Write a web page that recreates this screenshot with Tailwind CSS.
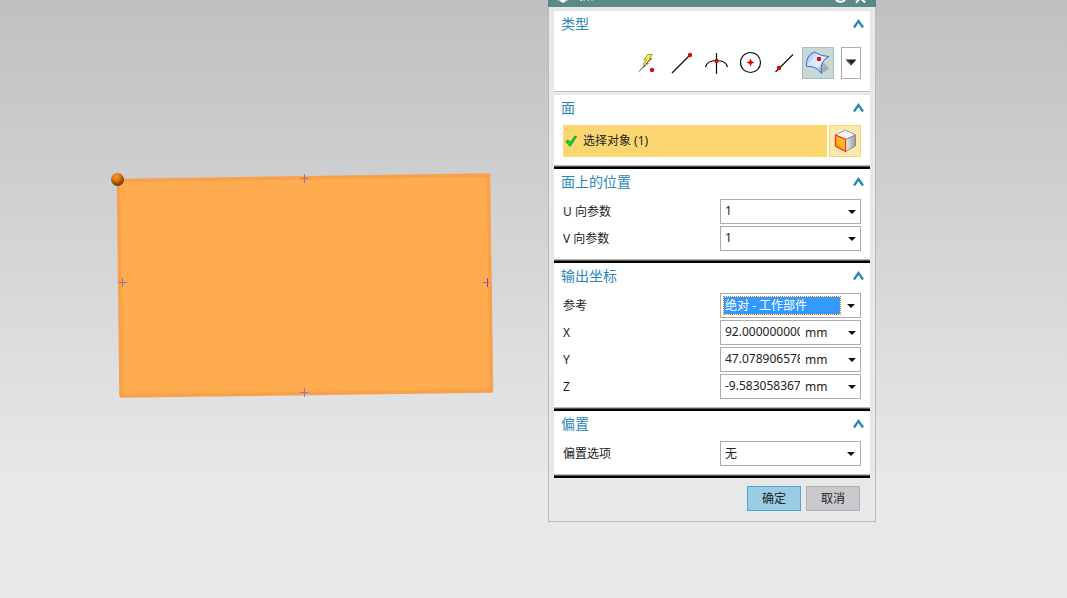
<!DOCTYPE html>
<html lang="zh-CN">
<head>
<meta charset="utf-8">
<title>点</title>
<script src="https://cdn.jsdelivr.net/npm/@tailwindcss/browser@4"></script>
</head>
<body class="font-['Noto_Sans','Noto_Sans_CJK_SC',sans-serif] text-[12px] leading-4 text-[#222]">
<main class="relative h-screen overflow-hidden bg-linear-to-b from-[#bfc0c1] to-[#e7e8e9] to-80%">

  <svg class="absolute left-[108px] top-[168px]" width="390" height="234" viewBox="0 0 390 234" role="img" aria-label="选定的面">
    <defs>
      <radialGradient id="ball" cx=".4" cy=".28" r=".7"><stop offset="0" stop-color="#ff9c2c"/><stop offset=".5" stop-color="#d8700c"/><stop offset="1" stop-color="#6b3405"/></radialGradient>
    </defs>
    <path d="M10.500 12.500L380.500 7L383.500 223L13 228Z" fill="#ffab50" stroke="#f9a04a" stroke-width="3.500" stroke-linejoin="round"/>
    <g stroke="#9a70a8" stroke-width="1"><path d="M192.500 10.500h8M196.500 6v9M192.500 224.500h8M196.500 220v9M10.500 114.500h8M14.500 110v9M375 114.500h6"/><path stroke="#6a4fb0" d="M379.500 110v9"/></g>
    <circle cx="9.500" cy="11.500" r="6.500" fill="url(#ball)"/>
  </svg>

  <section class="absolute left-[548px] top-0 w-[328px] border border-t-0 border-[#bcbdbf] bg-[#e8e8e8]" aria-label="点">
    <header class="-mx-px h-[7px] overflow-hidden bg-[#5b8983]">
      <svg class="w-full" width="328" height="7" viewBox="0 0 328 7" fill="none" stroke="#fff" stroke-width="1.500" aria-hidden="true">
        <path d="M10 -.2h10M15 0v3M12.500 1.200h5"/><path d="M32 .5h2M35.500 .5h1M40 .5h1M43.500 .5h1" stroke="#dce6e4" stroke-width="1"/><path d="M288 -2q0 3.800 4.500 3.800T297 -2M308 2.500l4.500-4.500 4.500 4.500" stroke-width="2"/>
      </svg>
    </header>

    <form class="px-[5px] pt-1" onsubmit="return false">
      <section class="mb-[3px] border-b border-[#c0c0c0] bg-white pb-3">
        <div class="mb-[10px] flex h-[26px] items-center justify-between pl-[7px] pr-[6px]">
          <h2 class="text-[14px] leading-5 text-[#2987bd]">类型</h2>
          <button type="button" aria-label="折叠类型"><svg width="11" height="11" viewBox="0 0 11 11" fill="none" stroke="#2987b8" stroke-width="2.300"><path d="M1 8.500L5.500 2L10 8.500"/></svg></button>
        </div>
        <div class="flex justify-end gap-[2px] pr-[9px]">
          <button type="button" aria-label="自动判断的点" class="size-8"><svg width="32" height="32" viewBox="0 0 32 32"><path d="M15.500 7.500H20.500L17.500 11.500H20L14.500 16.500H16.500L11 20.500L13 17.500L11 17L14.500 13H12Z" fill="#ffe93a" stroke="#8a8238" stroke-width=".8"/><path d="M7 24.500L13 18M14 17L19 11.500" stroke="#4b4b49" stroke-width="1"/><circle cx="20" cy="23" r="2.200" fill="#d60b08"/></svg></button>
          <button type="button" aria-label="端点" class="size-8"><svg width="32" height="32" viewBox="0 0 32 32"><path d="M6 26L23 9" stroke="#111" stroke-width="1.200"/><circle cx="24" cy="8" r="2.200" fill="#d60b08"/></svg></button>
          <button type="button" aria-label="交点" class="size-8"><svg width="32" height="32" viewBox="0 0 32 32"><path d="M5.500 20Q7 13.500 16.500 13.500T27.500 20M16.500 6v21" fill="none" stroke="#111" stroke-width="1.200"/><circle cx="16.500" cy="14" r="2.200" fill="#d60b08"/></svg></button>
          <button type="button" aria-label="圆心" class="size-8"><svg width="32" height="32" viewBox="0 0 32 32"><circle cx="16.500" cy="15.500" r="10" fill="none" stroke="#111" stroke-width="1.200"/><path d="M16.500 11.500L17.700 14.300L20.500 15.500L17.700 16.700L16.500 19.500L15.300 16.700L12.500 15.500L15.300 14.300Z" fill="#d60b08"/></svg></button>
          <button type="button" aria-label="曲线上的点" class="size-8"><svg width="32" height="32" viewBox="0 0 32 32"><path d="M7.500 25L25 7.500" stroke="#111" stroke-width="1.200"/><circle cx="11" cy="21" r="2.200" fill="#d60b08"/></svg></button>
          <button type="button" aria-label="面上的点" aria-pressed="true" class="size-8 border border-[#a5beba] bg-[#c8d8d6]"><svg class="-m-px" width="32" height="32" viewBox="0 0 32 32">
            <defs><linearGradient id="surf" x1="0" x2="1" y1="0" y2=".8"><stop offset="0" stop-color="#6fa2f0"/><stop offset=".35" stop-color="#d6e6ff"/><stop offset=".6" stop-color="#e4efff"/><stop offset="1" stop-color="#5c94ea"/></linearGradient></defs>
            <path d="M20 26L18.500 18L22 15.500L27 21.500Q24 25 20 26" fill="#a5b0af"/>
            <path d="M12.500 5Q19 9.500 27 9.500Q17.500 14 19.500 26.500Q14.500 18.500 4.500 19.500Q3.500 8 12.500 5Z" fill="url(#surf)" stroke="#426cc4" stroke-width="1"/><circle cx="17" cy="12" r="2.200" fill="#d60b08"/></svg></button>
          <button type="button" aria-label="更多类型" class="ml-[5px] flex h-8 w-5 items-center justify-center border border-[#acacac] bg-white"><svg width="12" height="8" viewBox="0 0 12 8"><path d="M.5 .5H11.500L6 6.500Z" fill="#222"/><path d="M2.500 1.500L6 5" stroke="#777"/></svg></button>
        </div>
      </section>

      <section class="bg-white">
        <div class="mb-1 flex h-[26px] items-center justify-between pl-[7px] pr-[6px]">
          <h2 class="text-[14px] leading-5 text-[#2987bd]">面</h2>
          <button type="button" aria-label="折叠面"><svg width="11" height="11" viewBox="0 0 11 11" fill="none" stroke="#2987b8" stroke-width="2.300"><path d="M1 8.500L5.500 2L10 8.500"/></svg></button>
        </div>
        <div class="flex gap-[2px] pb-2 pl-[9px] pr-[9px]">
          <button type="button" class="flex h-8 flex-1 items-center gap-[6px] bg-[#fcd66f] pl-[2px] text-left"><svg width="12" height="12" viewBox="0 0 12 12"><path d="M.8 6.500L3 5L5 7.500L10 1L11.500 1.500L5.500 11H4.500Z" fill="#16d93e" stroke="#10a82a" stroke-width="1"/></svg>选择对象 (1)</button>
          <button type="button" aria-label="面规则" class="size-8 border border-[#fbd46c] bg-[#fae9b0]"><svg class="-m-px" width="32" height="32" viewBox="0 0 32 32">
            <defs><linearGradient id="front" x1="0" x2="1" y1="1" y2="0"><stop offset="0" stop-color="#ff9800"/><stop offset="1" stop-color="#ffd248"/></linearGradient><linearGradient id="side"><stop offset="0" stop-color="#f0f0f0"/><stop offset="1" stop-color="#999"/></linearGradient></defs>
            <path d="M6.500 10L16.500 5L26.500 10L16.500 14.500Z" fill="#f7f7fa" stroke="#999" stroke-width="1"/><path d="M16.500 14.500L26.500 10V21L16.500 26.500Z" fill="url(#side)" stroke="#8d8d8d"/><path d="M6.500 10L16.500 14.500V26.500L6.500 21Z" fill="url(#front)" stroke="#f5321c" stroke-width="1.300"/></svg></button>
        </div>
        <div class="h-1 border-b-2 border-t border-b-black border-t-[#b8b8b8] bg-[#555]"></div>
      </section>

      <section class="bg-white">
        <div class="mb-1 flex h-[26px] items-center justify-between pl-[7px] pr-[6px]">
          <h2 class="text-[14px] leading-5 text-[#2987bd]">面上的位置</h2>
          <button type="button" aria-label="折叠面上的位置"><svg width="11" height="11" viewBox="0 0 11 11" fill="none" stroke="#2987b8" stroke-width="2.300"><path d="M1 8.500L5.500 2L10 8.500"/></svg></button>
        </div>
        <div class="grid gap-[2px] pb-2 pl-[9px] pr-[9px]">
          <div class="flex items-center justify-between"><label for="u">U 向参数</label>
            <div class="flex h-[25px] w-[141px] border border-[#acacac] bg-white"><input id="u" value="1" class="min-w-0 flex-1 pb-[2px] pl-1 outline-none"><button type="button" aria-label="U 选项" class="flex w-4 items-center justify-center"><svg width="8" height="4" viewBox="0 0 8 4"><path d="M0 0H8L4 4Z" fill="#111"/></svg></button></div></div>
          <div class="flex items-center justify-between"><label for="v">V 向参数</label>
            <div class="flex h-[25px] w-[141px] border border-[#acacac] bg-white"><input id="v" value="1" class="min-w-0 flex-1 pb-[2px] pl-1 outline-none"><button type="button" aria-label="V 选项" class="flex w-4 items-center justify-center"><svg width="8" height="4" viewBox="0 0 8 4"><path d="M0 0H8L4 4Z" fill="#111"/></svg></button></div></div>
        </div>
        <div class="h-1 border-b-2 border-t border-b-black border-t-[#b8b8b8] bg-[#555]"></div>
      </section>

      <section class="bg-white">
        <div class="mb-1 flex h-[26px] items-center justify-between pl-[7px] pr-[6px]">
          <h2 class="text-[14px] leading-5 text-[#2987bd]">输出坐标</h2>
          <button type="button" aria-label="折叠输出坐标"><svg width="11" height="11" viewBox="0 0 11 11" fill="none" stroke="#2987b8" stroke-width="2.300"><path d="M1 8.500L5.500 2L10 8.500"/></svg></button>
        </div>
        <div class="grid gap-[2px] pb-2 pl-[9px] pr-[9px]">
          <div class="flex items-center justify-between"><label for="ref">参考</label>
            <div class="relative flex h-[25px] w-[141px] border border-[#acacac] bg-white py-[2px] pl-[2px] pr-[19px]"><select id="ref" class="w-full appearance-none border border-dotted border-[#e07a20] bg-[#3399ff] bg-clip-padding pl-px leading-4 text-white outline-none"><option>绝对 - 工作部件</option></select><svg class="pointer-events-none absolute right-[5px] top-[10px]" width="8" height="4" viewBox="0 0 8 4"><path d="M0 0H8L4 4Z" fill="#111"/></svg></div></div>
          <div class="flex items-center justify-between"><label for="x">X</label>
            <div class="flex h-[25px] w-[141px] border border-[#acacac] bg-white"><input id="x" value="92.000000000" class="w-[79px] pb-[2px] pl-1 outline-none"><span class="flex-1 self-center pl-[5px]">mm</span><button type="button" aria-label="X 选项" class="flex w-4 items-center justify-center"><svg width="8" height="4" viewBox="0 0 8 4"><path d="M0 0H8L4 4Z" fill="#111"/></svg></button></div></div>
          <div class="flex items-center justify-between"><label for="y">Y</label>
            <div class="flex h-[25px] w-[141px] border border-[#acacac] bg-white"><input id="y" value="47.078906578" class="w-[79px] pb-[2px] pl-1 outline-none"><span class="flex-1 self-center pl-[5px]">mm</span><button type="button" aria-label="Y 选项" class="flex w-4 items-center justify-center"><svg width="8" height="4" viewBox="0 0 8 4"><path d="M0 0H8L4 4Z" fill="#111"/></svg></button></div></div>
          <div class="flex items-center justify-between"><label for="z">Z</label>
            <div class="flex h-[25px] w-[141px] border border-[#acacac] bg-white"><input id="z" value="-9.583058367" class="w-[79px] pb-[2px] pl-1 outline-none"><span class="flex-1 self-center pl-[5px]">mm</span><button type="button" aria-label="Z 选项" class="flex w-4 items-center justify-center"><svg width="8" height="4" viewBox="0 0 8 4"><path d="M0 0H8L4 4Z" fill="#111"/></svg></button></div></div>
        </div>
        <div class="h-1 border-b-2 border-t border-b-black border-t-[#b8b8b8] bg-[#555]"></div>
      </section>

      <section class="bg-white">
        <div class="mb-1 flex h-[26px] items-center justify-between pl-[7px] pr-[6px]">
          <h2 class="text-[14px] leading-5 text-[#2987bd]">偏置</h2>
          <button type="button" aria-label="折叠偏置"><svg width="11" height="11" viewBox="0 0 11 11" fill="none" stroke="#2987b8" stroke-width="2.300"><path d="M1 8.500L5.500 2L10 8.500"/></svg></button>
        </div>
        <div class="flex items-center justify-between pb-2 pl-[9px] pr-[9px]"><label for="off">偏置选项</label>
          <div class="relative flex h-[25px] w-[141px] border border-[#acacac] bg-white"><select id="off" class="w-full appearance-none pl-1 outline-none"><option>无</option></select><svg class="pointer-events-none absolute right-[5px] top-[10px]" width="8" height="4" viewBox="0 0 8 4"><path d="M0 0H8L4 4Z" fill="#111"/></svg></div></div>
        <div class="h-1 border-b-2 border-t border-b-black border-t-[#b8b8b8] bg-[#555]"></div>
      </section>

      <div class="flex justify-end gap-[5px] pb-[10px] pr-[10px] pt-2">
        <button type="submit" class="h-[25px] w-[54px] border border-[#4da3d6] bg-[#9bcce6]">确定</button>
        <button type="button" class="h-[25px] w-[54px] border border-[#b0b0b2] bg-[#cacace]">取消</button>
      </div>
    </form>
  </section>
</main>
</body>
</html>
